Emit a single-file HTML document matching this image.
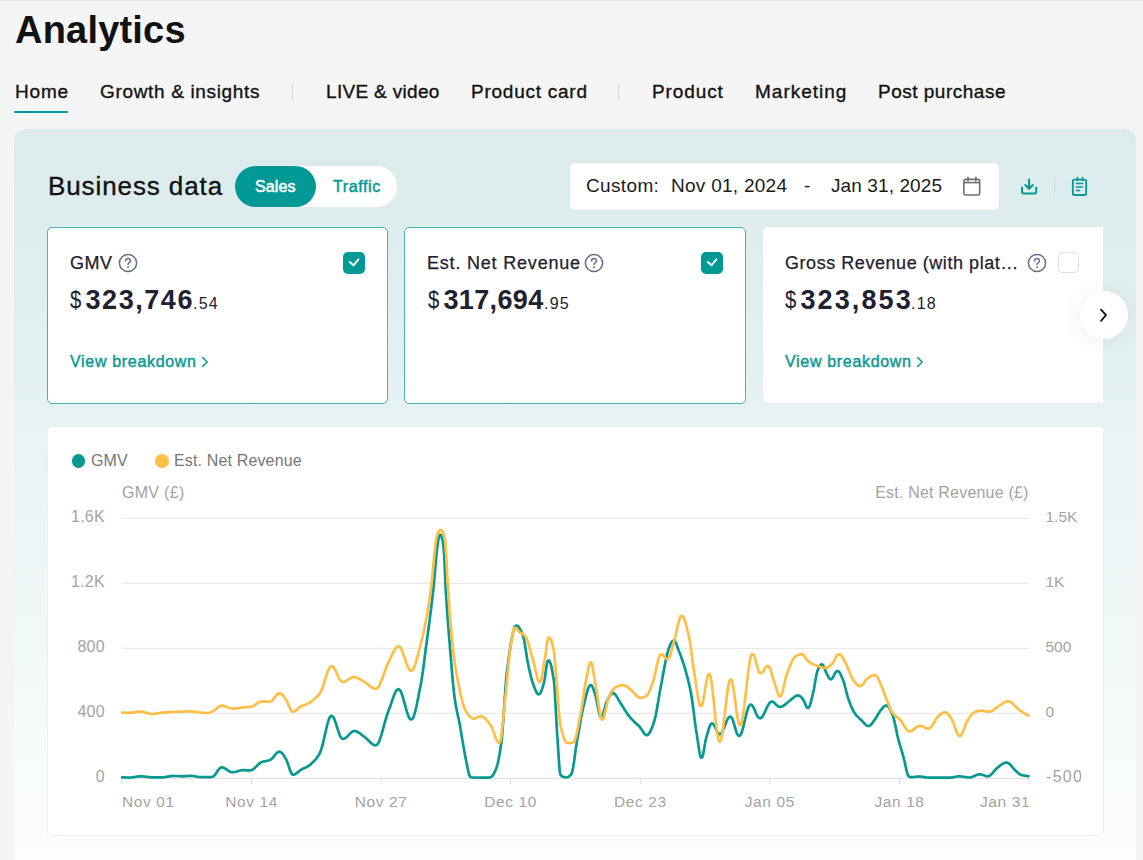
<!DOCTYPE html>
<html><head><meta charset="utf-8">
<style>
*{margin:0;padding:0;box-sizing:border-box}
html,body{width:1143px;height:860px;overflow:hidden;background:#f5f5f5;font-family:"Liberation Sans",sans-serif;color:#121212}
.abs{position:absolute;white-space:nowrap}
#topline{position:absolute;left:0;top:0;width:1143px;height:1px;background:#e3e3e3}
#title{left:15px;top:8px;font-size:38px;font-weight:bold;line-height:44px;color:#121212;letter-spacing:0.2px}
.tab{top:80px;font-size:19px;line-height:24px;color:#121212;-webkit-text-stroke:0.35px #121212}
.sep{position:absolute;top:84px;width:1px;height:16px;background:#d5d5d5}
#uline{position:absolute;left:14px;top:110.75px;width:54px;height:2.5px;background:#009995;border-radius:2px}
#panel{position:absolute;left:14px;top:129px;width:1122px;height:760px;border-radius:12px;background:linear-gradient(180deg,#dbebeb 0%,#e0eeee 20.5%,#e7f3f3 38.3%,#eff8f7 62.6%,#fcfdfd 95%,#fdfefe 100%)}
#bd{left:48px;top:171px;font-size:26px;line-height:30px;letter-spacing:0.9px;color:#121212;-webkit-text-stroke:0.35px #121212}
#toggle{position:absolute;left:235px;top:166px;width:162px;height:41px;border-radius:21px;background:#fff}
#sales{position:absolute;left:0;top:0;width:81px;height:41px;border-radius:21px;background:#009995}
#salesT{left:255px;top:178px;font-size:16px;line-height:18px;color:#fff;letter-spacing:0.1px;-webkit-text-stroke:0.5px #fff}
#trafT{left:333px;top:178px;font-size:16px;line-height:18px;color:#009995;letter-spacing:0.6px;-webkit-text-stroke:0.45px #009995}
#date{position:absolute;left:568.5px;top:162px;width:431px;height:48.5px;border-radius:6px;background:#fff;border:1px solid #e2e5e5}
.dt{top:175px;font-size:19px;line-height:22px;color:#1a1a1a}
.card{position:absolute;top:227px;height:176.5px;border-radius:5px;background:#fff}
.sel{border:1.1px solid #4db2ad}
.ctitle{top:251.5px;font-size:18px;line-height:22px;color:#1f2030;letter-spacing:0.8px;-webkit-text-stroke:0.25px #1f2030}
.q{position:absolute;top:254px;width:18px;height:18px;border:1.5px solid #6e7287;border-radius:50%;color:#6e7287;font-size:12px;line-height:15px;text-align:center}
.cb{position:absolute;top:252.3px;width:22px;height:21.7px;border-radius:5px;background:#009995}
.cb0{position:absolute;top:252px;width:21px;height:21px;border-radius:4px;background:#fff;border:1px solid #dfe0e6}
.dollar{top:287px;font-size:23px;line-height:26px;color:#1f2030;transform:scaleX(0.88);transform-origin:left}
.big{top:284.5px;font-size:27px;font-weight:bold;line-height:30px;color:#1f2030;letter-spacing:1.55px}
.cents{top:294px;font-size:16px;line-height:20px;color:#1f2030;letter-spacing:1.2px}
.vb{top:352px;font-size:16px;line-height:20px;color:#0c9a95;letter-spacing:0.68px;-webkit-text-stroke:0.45px #0c9a95;width:150px;height:20px}
#chev{position:absolute;left:1080px;top:291px;width:48px;height:48px;border-radius:50%;background:#fff;box-shadow:0 2px 22px rgba(0,0,0,0.075)}
#chart{position:absolute;left:47px;top:425.5px;width:1056.5px;height:410px;border-radius:5px;background:#fff;border:1px solid #edf0f0}
.lab{font-size:16px;line-height:18px;color:#a3a3a3}
.rl{left:1045.5px;margin-top:0.7px;font-size:15.5px}
.xa{top:793px;font-size:15.5px;letter-spacing:0.6px}
.chv{display:inline-block;font-weight:normal;font-size:20px;line-height:20px;vertical-align:top;margin-top:-2px}
.leg{font-size:16px;line-height:18px;color:#767676;letter-spacing:0.15px}
.ry{right:1038.2px;text-align:right;letter-spacing:0.2px}
.xl{transform:translateX(-50%)}
</style></head><body>
<div id="topline"></div>
<div id="title" class="abs">Analytics</div>
<div class="abs tab" style="left:15px;letter-spacing:0.8px">Home</div>
<div class="abs tab" style="left:100px;letter-spacing:0.66px">Growth &amp; insights</div>
<div class="sep" style="left:292px"></div>
<div class="abs tab" style="left:326px;letter-spacing:0.32px">LIVE &amp; video</div>
<div class="abs tab" style="left:471px;letter-spacing:0.75px">Product card</div>
<div class="sep" style="left:618px"></div>
<div class="abs tab" style="left:652px;letter-spacing:0.9px">Product</div>
<div class="abs tab" style="left:755px;letter-spacing:1px">Marketing</div>
<div class="abs tab" style="left:878px;letter-spacing:0.5px">Post purchase</div>
<div id="uline"></div>
<div id="panel"></div>
<div id="bd" class="abs">Business data</div>
<div id="toggle"><div id="sales"></div></div>
<div id="salesT" class="abs">Sales</div>
<div id="trafT" class="abs">Traffic</div>
<div id="date"></div>
<div class="abs dt" style="left:586px;letter-spacing:0.35px">Custom:</div>
<div class="abs dt" style="left:671px;letter-spacing:0.27px">Nov 01, 2024</div>
<div class="abs dt" style="left:804px">-</div>
<div class="abs dt" style="left:831px;letter-spacing:0.1px">Jan 31, 2025</div>

<svg class="abs" style="left:955px;top:170px" width="140" height="35" viewBox="955 170 140 35">
<rect x="963.9" y="179.4" width="15.8" height="15.6" rx="2" fill="none" stroke="#6f6f6f" stroke-width="1.6"/>
<line x1="964" y1="182.6" x2="979.6" y2="182.6" stroke="#6f6f6f" stroke-width="1.6"/>
<line x1="968" y1="177.3" x2="968" y2="181" stroke="#6f6f6f" stroke-width="1.6" stroke-linecap="round"/>
<line x1="975.8" y1="177.3" x2="975.8" y2="181" stroke="#6f6f6f" stroke-width="1.6" stroke-linecap="round"/>
<path d="M1029.1 179.6 V188.6 M1025.4 185 L1029.1 188.8 L1032.8 185" fill="none" stroke="#079892" stroke-width="2" stroke-linecap="round" stroke-linejoin="round"/>
<path d="M1022 187.6 V191.8 Q1022 193.4 1023.6 193.4 H1034.6 Q1036.2 193.4 1036.2 191.8 V187.6" fill="none" stroke="#079892" stroke-width="2" stroke-linecap="round"/>
<line x1="1054.5" y1="177.5" x2="1054.5" y2="195.5" stroke="#c9dcdc" stroke-width="1"/>
<rect x="1072.8" y="179.6" width="13.4" height="15.4" rx="1.8" fill="none" stroke="#079892" stroke-width="1.8"/>
<line x1="1077.5" y1="177.6" x2="1077.5" y2="180.6" stroke="#079892" stroke-width="1.6" stroke-linecap="round"/>
<line x1="1082.6" y1="177.6" x2="1082.6" y2="180.6" stroke="#079892" stroke-width="1.6" stroke-linecap="round"/>
<line x1="1076.3" y1="183.6" x2="1082.6" y2="183.6" stroke="#079892" stroke-width="1.5" stroke-linecap="round"/>
<line x1="1076.3" y1="187.1" x2="1082.6" y2="187.1" stroke="#079892" stroke-width="1.5" stroke-linecap="round"/>
<line x1="1076.3" y1="190.6" x2="1079.6" y2="190.6" stroke="#079892" stroke-width="1.5" stroke-linecap="round"/>
</svg>

<div class="card sel" style="left:47px;width:341px"></div>
<div class="card sel" style="left:404px;width:342px"></div>
<div class="card" style="left:763px;width:340px;height:175.5px;border-radius:5px 0 0 5px"></div>
<div class="abs ctitle" style="left:70px;letter-spacing:0.5px">GMV</div><svg class="abs" style="left:118px;top:253.4px" width="20" height="20" viewBox="0 0 20 20"><circle cx="10" cy="10" r="8.6" fill="none" stroke="#6b6f86" stroke-width="1.5"/><path d="M7.6 7.9 Q7.7 5.6 10 5.6 Q12.4 5.6 12.4 7.8 Q12.4 9.2 11 9.9 Q10 10.4 10 11.6" fill="none" stroke="#6b6f86" stroke-width="1.5" stroke-linecap="round"/><circle cx="10" cy="14.3" r="0.95" fill="#6b6f86"/></svg>
<div class="cb" style="left:343px"><svg width="22" height="22" viewBox="0 0 22 22"><path d="M6.7 10 L10.5 13.3 L15.4 7.4" fill="none" stroke="#fff" stroke-width="2" stroke-linecap="round" stroke-linejoin="round"/></svg></div>
<div class="abs dollar" style="left:70px">$</div>
<div class="abs big" style="left:85.5px">323,746</div>
<div class="abs cents" style="left:193px">.54</div>
<div class="abs vb" style="left:70px">View breakdown<svg style="position:absolute;left:130.5px;top:4px" width="8" height="12" viewBox="0 0 8 12"><path d="M1.6 1.5 L6.2 6 L1.6 10.5" fill="none" stroke="#0c9a95" stroke-width="1.6" stroke-linecap="round" stroke-linejoin="round"/></svg></div>
<div class="abs ctitle" style="left:427px">Est. Net Revenue</div><svg class="abs" style="left:584px;top:253.4px" width="20" height="20" viewBox="0 0 20 20"><circle cx="10" cy="10" r="8.6" fill="none" stroke="#6b6f86" stroke-width="1.5"/><path d="M7.6 7.9 Q7.7 5.6 10 5.6 Q12.4 5.6 12.4 7.8 Q12.4 9.2 11 9.9 Q10 10.4 10 11.6" fill="none" stroke="#6b6f86" stroke-width="1.5" stroke-linecap="round"/><circle cx="10" cy="14.3" r="0.95" fill="#6b6f86"/></svg>
<div class="cb" style="left:701px"><svg width="22" height="22" viewBox="0 0 22 22"><path d="M6.7 10 L10.5 13.3 L15.4 7.4" fill="none" stroke="#fff" stroke-width="2" stroke-linecap="round" stroke-linejoin="round"/></svg></div>
<div class="abs dollar" style="left:428px">$</div>
<div class="abs big" style="left:443.5px;letter-spacing:0.35px">317,694</div>
<div class="abs cents" style="left:544px">.95</div>
<div class="abs ctitle" style="left:785px;letter-spacing:0.55px">Gross Revenue (with plat…</div><svg class="abs" style="left:1027px;top:253.4px" width="20" height="20" viewBox="0 0 20 20"><circle cx="10" cy="10" r="8.6" fill="none" stroke="#6b6f86" stroke-width="1.5"/><path d="M7.6 7.9 Q7.7 5.6 10 5.6 Q12.4 5.6 12.4 7.8 Q12.4 9.2 11 9.9 Q10 10.4 10 11.6" fill="none" stroke="#6b6f86" stroke-width="1.5" stroke-linecap="round"/><circle cx="10" cy="14.3" r="0.95" fill="#6b6f86"/></svg>
<div class="cb0" style="left:1058px"></div>
<div class="abs dollar" style="left:785px">$</div>
<div class="abs big" style="left:800.5px;letter-spacing:2.1px">323,853</div>
<div class="abs cents" style="left:911px">.18</div>
<div class="abs vb" style="left:785px">View breakdown<svg style="position:absolute;left:130.5px;top:4px" width="8" height="12" viewBox="0 0 8 12"><path d="M1.6 1.5 L6.2 6 L1.6 10.5" fill="none" stroke="#0c9a95" stroke-width="1.6" stroke-linecap="round" stroke-linejoin="round"/></svg></div>
<div id="chev"><svg width="48" height="48" viewBox="0 0 48 48"><path d="M21 18.6 L26 24.2 L21 29.8" fill="none" stroke="#121212" stroke-width="1.8" stroke-linecap="round" stroke-linejoin="round"/></svg></div>


<div id="chart"></div>
<div class="abs" style="left:71.9px;top:454.2px;width:13.6px;height:13.6px;border-radius:50%;background:#079892"></div>
<div class="abs leg" style="left:91px;top:452px">GMV</div>
<div class="abs" style="left:155px;top:454.2px;width:13.6px;height:13.6px;border-radius:50%;background:#ffbf47"></div>
<div class="abs leg" style="left:174px;top:452px">Est. Net Revenue</div>
<div class="abs lab" style="left:122px;top:484px;font-size:16px;letter-spacing:0.3px">GMV (£)</div>
<div class="abs lab" style="right:114.4px;top:484px;font-size:16px;letter-spacing:0.2px">Est. Net Revenue (£)</div>
<div class="abs lab ry" style="top:507.5px">1.6K</div>
<div class="abs lab ry" style="top:572.5px">1.2K</div>
<div class="abs lab ry" style="top:637.5px">800</div>
<div class="abs lab ry" style="top:702.5px">400</div>
<div class="abs lab ry" style="top:767.5px">0</div>
<div class="abs lab rl" style="top:507.5px">1.5K</div>
<div class="abs lab rl" style="top:572.5px">1K</div>
<div class="abs lab rl" style="top:637.5px">500</div>
<div class="abs lab rl" style="top:702.5px">0</div>
<div class="abs" style="left:1046px;top:768.2px;width:34.8px;height:20px;overflow:hidden"><span class="lab" style="letter-spacing:1.3px">-500</span></div>
<div class="abs lab xa" style="left:122px">Nov 01</div>
<div class="abs lab xa xl" style="left:251.5px">Nov 14</div>
<div class="abs lab xa xl" style="left:381.2px">Nov 27</div>
<div class="abs lab xa xl" style="left:510.6px">Dec 10</div>
<div class="abs lab xa xl" style="left:640.3px">Dec 23</div>
<div class="abs lab xa xl" style="left:769.8px">Jan 05</div>
<div class="abs lab xa xl" style="left:899.5px">Jan 18</div>
<div class="abs lab xa" style="right:112.9px">Jan 31</div>
<!--CHARTSVG--><svg class="abs" style="left:0;top:0" width="1143" height="860" viewBox="0 0 1143 860"><line x1="121.5" y1="518.3" x2="1029.5" y2="518.3" stroke="#e4e4e4" stroke-width="1"/><line x1="121.5" y1="583.3" x2="1029.5" y2="583.3" stroke="#e4e4e4" stroke-width="1"/><line x1="121.5" y1="648.3" x2="1029.5" y2="648.3" stroke="#e4e4e4" stroke-width="1"/><line x1="121.5" y1="713.3" x2="1029.5" y2="713.3" stroke="#e4e4e4" stroke-width="1"/><line x1="121.5" y1="778.3" x2="1029.5" y2="778.3" stroke="#d9d9d9" stroke-width="1"/><line x1="121.8" y1="778" x2="121.8" y2="784" stroke="#d9d9d9" stroke-width="1"/><line x1="251.5" y1="778" x2="251.5" y2="784" stroke="#d9d9d9" stroke-width="1"/><line x1="381.2" y1="778" x2="381.2" y2="784" stroke="#d9d9d9" stroke-width="1"/><line x1="510.6" y1="778" x2="510.6" y2="784" stroke="#d9d9d9" stroke-width="1"/><line x1="640.3" y1="778" x2="640.3" y2="784" stroke="#d9d9d9" stroke-width="1"/><line x1="769.8" y1="778" x2="769.8" y2="784" stroke="#d9d9d9" stroke-width="1"/><line x1="899.5" y1="778" x2="899.5" y2="784" stroke="#d9d9d9" stroke-width="1"/><line x1="1029.0" y1="778" x2="1029.0" y2="784" stroke="#d9d9d9" stroke-width="1"/><path d="M122.1 777.2 L123.1 777.3 L124.5 777.4 L126.0 777.5 L127.5 777.5 L129.0 777.6 L130.5 777.5 L132.0 777.4 L133.5 777.2 L134.9 777.0 L136.4 776.7 L137.9 776.5 L139.4 776.4 L140.9 776.4 L142.4 776.4 L143.9 776.5 L145.4 776.7 L146.9 776.9 L148.4 777.1 L149.8 777.2 L151.3 777.3 L152.8 777.4 L154.3 777.4 L155.8 777.4 L157.3 777.4 L158.8 777.4 L160.3 777.4 L161.8 777.4 L163.3 777.3 L164.8 777.1 L166.3 776.9 L167.8 776.6 L169.3 776.4 L170.7 776.2 L172.2 776.0 L173.7 775.9 L175.2 776.0 L176.7 776.0 L178.2 776.1 L179.7 776.2 L181.2 776.2 L182.7 776.3 L184.2 776.2 L185.7 776.1 L187.2 776.0 L188.7 775.8 L190.2 775.8 L191.7 775.8 L193.2 776.0 L194.6 776.2 L196.1 776.5 L197.6 776.8 L199.1 777.0 L200.5 777.2 L202.0 777.2 L203.5 777.2 L205.0 777.2 L206.5 777.2 L208.0 777.2 L209.5 777.2 L211.0 777.1 L212.4 776.8 L213.7 776.1 L214.7 775.1 L215.6 773.9 L216.4 772.7 L217.2 771.4 L218.1 770.2 L219.0 769.0 L220.1 768.0 L221.3 767.4 L222.7 767.4 L224.0 767.9 L225.3 768.6 L226.5 769.4 L227.8 770.3 L229.0 771.1 L230.3 771.8 L231.7 772.2 L233.2 772.2 L234.7 772.0 L236.1 771.7 L237.6 771.2 L239.0 770.8 L240.4 770.5 L241.9 770.2 L243.4 770.2 L244.9 770.2 L246.4 770.3 L247.9 770.4 L249.4 770.4 L250.9 770.3 L252.2 769.8 L253.5 769.1 L254.6 768.1 L255.7 767.1 L256.8 766.0 L257.8 764.9 L258.9 763.9 L260.0 763.0 L261.3 762.2 L262.7 761.7 L264.1 761.3 L265.6 761.1 L267.1 760.8 L268.5 760.5 L269.9 760.0 L271.2 759.3 L272.3 758.3 L273.3 757.2 L274.2 756.0 L275.1 754.8 L276.1 753.7 L277.1 752.6 L278.3 751.9 L279.6 751.7 L280.9 752.2 L282.0 753.1 L282.9 754.3 L283.8 755.5 L284.6 756.8 L285.3 758.1 L286.1 759.4 L286.8 760.7 L287.3 762.1 L287.8 763.5 L288.3 764.9 L288.8 766.4 L289.2 767.8 L289.7 769.2 L290.2 770.6 L290.7 772.0 L291.4 773.3 L292.2 774.4 L293.4 774.8 L294.6 774.5 L295.9 773.8 L297.0 772.9 L298.2 771.9 L299.3 770.9 L300.5 770.1 L301.8 769.3 L303.2 768.6 L304.5 768.0 L305.9 767.4 L307.2 766.7 L308.5 765.9 L309.7 765.1 L310.9 764.1 L312.0 763.1 L313.1 762.1 L314.1 761.0 L315.1 759.9 L316.1 758.8 L317.0 757.6 L317.9 756.4 L318.7 755.1 L319.4 753.8 L320.1 752.5 L320.7 751.1 L321.2 749.7 L321.6 748.2 L322.0 746.8 L322.4 745.3 L322.8 743.9 L323.2 742.4 L323.5 741.0 L323.8 739.5 L324.2 738.1 L324.5 736.6 L324.8 735.1 L325.2 733.7 L325.5 732.2 L325.8 730.7 L326.2 729.3 L326.5 727.8 L326.9 726.4 L327.2 724.9 L327.6 723.5 L328.0 722.0 L328.5 720.6 L328.9 719.2 L329.5 717.8 L330.3 716.6 L331.2 715.9 L332.3 716.1 L333.2 717.0 L333.9 718.3 L334.5 719.6 L335.1 721.0 L335.6 722.5 L336.0 723.9 L336.5 725.3 L336.9 726.8 L337.4 728.2 L337.8 729.6 L338.3 731.0 L338.8 732.5 L339.3 733.9 L339.8 735.3 L340.4 736.6 L341.2 737.9 L342.2 738.7 L343.4 738.9 L344.7 738.5 L345.9 737.7 L347.0 736.7 L348.1 735.6 L349.1 734.5 L350.2 733.4 L351.3 732.4 L352.5 731.6 L353.8 731.1 L355.2 731.1 L356.6 731.4 L358.0 732.1 L359.2 732.9 L360.5 733.7 L361.6 734.7 L362.8 735.6 L364.0 736.5 L365.2 737.4 L366.3 738.4 L367.4 739.4 L368.5 740.5 L369.5 741.5 L370.6 742.6 L371.7 743.6 L372.9 744.5 L374.2 745.1 L375.5 745.3 L376.8 744.9 L377.8 743.9 L378.5 742.6 L379.2 741.3 L379.7 739.9 L380.2 738.5 L380.7 737.0 L381.2 735.6 L381.6 734.2 L382.0 732.7 L382.4 731.3 L382.8 729.9 L383.2 728.4 L383.6 727.0 L384.0 725.5 L384.4 724.1 L384.8 722.6 L385.2 721.2 L385.6 719.7 L386.1 718.3 L386.5 716.9 L386.9 715.4 L387.4 714.0 L387.9 712.6 L388.4 711.2 L388.9 709.8 L389.4 708.4 L390.0 707.0 L390.5 705.5 L391.0 704.1 L391.4 702.7 L391.9 701.3 L392.4 699.9 L392.9 698.4 L393.4 697.0 L393.9 695.6 L394.5 694.2 L395.1 692.9 L395.8 691.5 L396.6 690.3 L397.6 689.4 L398.7 689.2 L399.7 689.9 L400.5 691.0 L401.2 692.4 L401.7 693.8 L402.2 695.2 L402.7 696.6 L403.1 698.0 L403.5 699.5 L403.9 700.9 L404.3 702.4 L404.7 703.8 L405.1 705.3 L405.5 706.7 L405.9 708.2 L406.3 709.6 L406.7 711.0 L407.1 712.5 L407.6 713.9 L408.1 715.3 L408.6 716.7 L409.3 718.0 L410.1 719.1 L411.2 719.5 L412.2 719.1 L413.0 718.0 L413.6 716.6 L414.1 715.2 L414.5 713.8 L415.0 712.4 L415.3 710.9 L415.7 709.4 L416.0 708.0 L416.4 706.5 L416.7 705.1 L417.0 703.6 L417.3 702.1 L417.6 700.6 L417.9 699.2 L418.2 697.7 L418.5 696.2 L418.7 694.8 L419.0 693.3 L419.3 691.8 L419.6 690.3 L419.9 688.9 L420.2 687.4 L420.5 685.9 L420.8 684.5 L421.0 683.0 L421.3 681.5 L421.5 680.0 L421.8 678.5 L422.0 677.1 L422.2 675.6 L422.4 674.1 L422.7 672.6 L422.9 671.1 L423.1 669.6 L423.3 668.2 L423.5 666.7 L423.7 665.2 L423.9 663.7 L424.1 662.2 L424.3 660.7 L424.5 659.2 L424.6 657.7 L424.8 656.3 L425.0 654.8 L425.2 653.3 L425.4 651.8 L425.6 650.3 L425.8 648.8 L426.0 647.3 L426.2 645.8 L426.4 644.4 L426.6 642.9 L426.8 641.4 L427.0 639.9 L427.2 638.4 L427.4 636.9 L427.6 635.4 L427.8 633.9 L428.0 632.5 L428.2 631.0 L428.4 629.5 L428.6 628.0 L428.8 626.5 L429.0 625.0 L429.2 623.5 L429.4 622.1 L429.6 620.6 L429.8 619.1 L429.9 617.6 L430.1 616.1 L430.3 614.6 L430.5 613.1 L430.7 611.6 L430.9 610.1 L431.1 608.7 L431.2 607.2 L431.4 605.7 L431.6 604.2 L431.8 602.7 L432.0 601.2 L432.1 599.7 L432.3 598.2 L432.5 596.7 L432.6 595.3 L432.8 593.8 L433.0 592.3 L433.1 590.8 L433.3 589.3 L433.5 587.8 L433.6 586.3 L433.8 584.8 L433.9 583.3 L434.1 581.8 L434.2 580.3 L434.3 578.8 L434.5 577.3 L434.6 575.9 L434.7 574.4 L434.8 572.9 L435.0 571.4 L435.1 569.9 L435.2 568.4 L435.3 566.9 L435.4 565.4 L435.6 563.9 L435.7 562.4 L435.8 560.9 L436.0 559.4 L436.1 557.9 L436.2 556.4 L436.4 554.9 L436.5 553.4 L436.7 551.9 L436.9 550.5 L437.0 549.0 L437.2 547.5 L437.4 546.0 L437.6 544.5 L437.8 543.0 L438.0 541.5 L438.3 540.1 L438.6 538.6 L438.9 537.1 L439.4 535.8 L440.0 534.9 L440.7 534.9 L441.3 535.8 L441.8 537.2 L442.1 538.6 L442.5 540.1 L442.8 541.6 L443.0 543.0 L443.2 544.5 L443.4 546.0 L443.5 547.5 L443.7 549.0 L443.8 550.5 L444.0 552.0 L444.1 553.5 L444.2 555.0 L444.3 556.5 L444.3 558.0 L444.4 559.5 L444.5 561.0 L444.5 562.5 L444.6 564.0 L444.7 565.5 L444.7 567.0 L444.8 568.5 L444.8 570.0 L444.9 571.5 L444.9 573.0 L445.0 574.5 L445.1 576.0 L445.1 577.5 L445.2 579.0 L445.3 580.5 L445.3 582.0 L445.4 583.5 L445.5 585.0 L445.6 586.5 L445.7 588.0 L445.7 589.5 L445.8 590.9 L445.9 592.4 L446.0 593.9 L446.1 595.4 L446.2 596.9 L446.3 598.4 L446.4 599.9 L446.5 601.4 L446.6 602.9 L446.7 604.4 L446.8 605.9 L446.9 607.4 L447.0 608.9 L447.1 610.4 L447.2 611.9 L447.3 613.4 L447.4 614.9 L447.5 616.4 L447.6 617.9 L447.7 619.4 L447.9 620.9 L448.0 622.4 L448.1 623.9 L448.2 625.4 L448.3 626.9 L448.4 628.4 L448.6 629.9 L448.7 631.3 L448.8 632.8 L448.9 634.3 L449.0 635.8 L449.2 637.3 L449.3 638.8 L449.4 640.3 L449.5 641.8 L449.7 643.3 L449.8 644.8 L449.9 646.3 L450.0 647.8 L450.1 649.3 L450.3 650.8 L450.4 652.3 L450.5 653.8 L450.6 655.3 L450.8 656.8 L450.9 658.3 L451.0 659.8 L451.1 661.2 L451.2 662.7 L451.4 664.2 L451.5 665.7 L451.6 667.2 L451.7 668.7 L451.9 670.2 L452.0 671.7 L452.1 673.2 L452.2 674.7 L452.4 676.2 L452.5 677.7 L452.6 679.2 L452.8 680.7 L452.9 682.2 L453.1 683.7 L453.2 685.2 L453.4 686.7 L453.5 688.1 L453.7 689.6 L453.8 691.1 L454.0 692.6 L454.2 694.1 L454.3 695.6 L454.5 697.1 L454.7 698.6 L454.9 700.1 L455.2 701.5 L455.4 703.0 L455.7 704.5 L455.9 706.0 L456.2 707.5 L456.5 708.9 L456.8 710.4 L457.1 711.9 L457.4 713.3 L457.7 714.8 L458.0 716.3 L458.4 717.7 L458.7 719.2 L459.0 720.7 L459.3 722.1 L459.6 723.6 L459.8 725.1 L460.1 726.5 L460.4 728.0 L460.6 729.5 L460.9 731.0 L461.1 732.5 L461.4 733.9 L461.6 735.4 L461.9 736.9 L462.1 738.4 L462.4 739.9 L462.6 741.3 L462.9 742.8 L463.1 744.3 L463.4 745.8 L463.6 747.3 L463.9 748.7 L464.1 750.2 L464.4 751.7 L464.7 753.2 L464.9 754.6 L465.2 756.1 L465.5 757.6 L465.8 759.0 L466.1 760.5 L466.4 762.0 L466.7 763.5 L467.0 764.9 L467.3 766.4 L467.6 767.9 L467.9 769.4 L468.2 770.8 L468.5 772.3 L468.9 773.7 L469.3 775.1 L469.9 776.4 L470.9 777.2 L472.3 777.5 L473.7 777.6 L475.2 777.6 L476.7 777.6 L478.2 777.6 L479.7 777.6 L481.2 777.6 L482.7 777.6 L484.2 777.6 L485.7 777.6 L487.2 777.6 L488.7 777.6 L490.1 777.4 L491.4 776.8 L492.5 775.9 L493.3 774.7 L494.0 773.4 L494.7 772.0 L495.3 770.6 L495.9 769.3 L496.4 767.9 L496.9 766.4 L497.3 765.0 L497.7 763.5 L498.0 762.1 L498.4 760.6 L498.7 759.1 L498.9 757.7 L499.2 756.2 L499.5 754.7 L499.7 753.2 L499.9 751.8 L500.2 750.3 L500.4 748.8 L500.6 747.3 L500.8 745.8 L501.1 744.3 L501.3 742.9 L501.5 741.4 L501.6 739.9 L501.8 738.4 L501.9 736.9 L502.1 735.4 L502.2 733.9 L502.4 732.4 L502.5 730.9 L502.6 729.4 L502.7 727.9 L502.8 726.4 L502.9 724.9 L503.1 723.4 L503.2 721.9 L503.3 720.5 L503.4 719.0 L503.5 717.5 L503.6 716.0 L503.7 714.5 L503.8 713.0 L503.9 711.5 L504.0 710.0 L504.1 708.5 L504.2 707.0 L504.3 705.5 L504.4 704.0 L504.5 702.5 L504.6 701.0 L504.7 699.5 L504.8 698.0 L504.9 696.5 L505.0 695.0 L505.1 693.5 L505.2 692.0 L505.3 690.5 L505.4 689.0 L505.5 687.5 L505.6 686.0 L505.8 684.5 L505.9 683.0 L506.0 681.5 L506.1 680.1 L506.2 678.6 L506.4 677.1 L506.5 675.6 L506.7 674.1 L506.8 672.6 L507.0 671.1 L507.2 669.6 L507.4 668.1 L507.6 666.6 L507.8 665.1 L508.0 663.7 L508.2 662.2 L508.4 660.7 L508.6 659.2 L508.8 657.7 L509.0 656.2 L509.2 654.7 L509.4 653.3 L509.6 651.8 L509.9 650.3 L510.1 648.8 L510.3 647.3 L510.5 645.8 L510.8 644.4 L511.0 642.9 L511.2 641.4 L511.5 639.9 L511.8 638.4 L512.0 637.0 L512.3 635.5 L512.6 634.0 L512.9 632.6 L513.3 631.1 L513.7 629.7 L514.1 628.2 L514.7 626.9 L515.5 625.9 L516.6 625.5 L517.7 626.0 L518.7 627.0 L519.5 628.2 L520.2 629.5 L520.9 630.9 L521.5 632.2 L522.1 633.6 L522.7 635.0 L523.2 636.4 L523.6 637.8 L523.9 639.3 L524.2 640.8 L524.5 642.2 L524.8 643.7 L525.0 645.2 L525.2 646.7 L525.5 648.2 L525.7 649.7 L525.9 651.1 L526.2 652.6 L526.4 654.1 L526.6 655.6 L526.8 657.1 L527.1 658.5 L527.3 660.0 L527.6 661.5 L527.9 663.0 L528.2 664.4 L528.5 665.9 L528.8 667.4 L529.1 668.8 L529.5 670.3 L529.8 671.8 L530.1 673.2 L530.5 674.7 L530.8 676.1 L531.2 677.6 L531.6 679.1 L532.0 680.5 L532.4 681.9 L532.9 683.3 L533.4 684.8 L533.9 686.2 L534.5 687.6 L535.0 689.0 L535.6 690.4 L536.2 691.7 L536.9 693.0 L537.8 694.0 L538.8 694.4 L539.8 693.9 L540.6 692.8 L541.2 691.5 L541.7 690.1 L542.2 688.6 L542.6 687.2 L543.1 685.8 L543.5 684.3 L543.9 682.9 L544.2 681.4 L544.5 679.9 L544.8 678.5 L545.0 677.0 L545.2 675.5 L545.4 674.0 L545.6 672.5 L545.8 671.0 L546.0 669.6 L546.3 668.1 L546.5 666.6 L546.7 665.1 L547.0 663.6 L547.3 662.2 L547.8 661.0 L548.5 660.4 L549.3 660.8 L549.9 662.0 L550.4 663.3 L550.9 664.8 L551.2 666.2 L551.6 667.7 L551.9 669.2 L552.2 670.6 L552.5 672.1 L552.7 673.6 L553.0 675.0 L553.2 676.5 L553.5 678.0 L553.7 679.5 L553.9 681.0 L554.1 682.5 L554.2 684.0 L554.3 685.5 L554.5 686.9 L554.6 688.4 L554.7 689.9 L554.8 691.4 L554.9 692.9 L555.0 694.4 L555.0 695.9 L555.1 697.4 L555.2 698.9 L555.3 700.4 L555.4 701.9 L555.5 703.4 L555.5 704.9 L555.6 706.4 L555.7 707.9 L555.8 709.4 L555.9 710.9 L555.9 712.4 L556.0 713.9 L556.1 715.4 L556.2 716.9 L556.3 718.4 L556.3 719.9 L556.4 721.4 L556.5 722.9 L556.6 724.4 L556.7 725.9 L556.8 727.4 L556.9 728.9 L556.9 730.4 L557.0 731.9 L557.1 733.4 L557.2 734.9 L557.3 736.4 L557.5 737.9 L557.6 739.4 L557.7 740.9 L557.7 742.4 L557.8 743.8 L557.9 745.3 L558.0 746.8 L558.1 748.3 L558.2 749.8 L558.3 751.3 L558.4 752.8 L558.5 754.3 L558.6 755.8 L558.7 757.3 L558.8 758.8 L558.9 760.3 L559.0 761.8 L559.1 763.3 L559.2 764.8 L559.3 766.3 L559.4 767.8 L559.6 769.3 L559.7 770.8 L559.9 772.3 L560.2 773.7 L560.7 775.0 L561.7 776.0 L562.9 776.8 L564.3 777.2 L565.8 777.3 L567.2 777.1 L568.6 776.7 L569.9 775.9 L570.9 774.9 L571.6 773.7 L572.1 772.3 L572.4 770.9 L572.7 769.4 L573.0 767.9 L573.3 766.4 L573.5 764.9 L573.7 763.5 L574.0 762.0 L574.2 760.5 L574.4 759.0 L574.6 757.5 L574.8 756.0 L575.0 754.6 L575.2 753.1 L575.4 751.6 L575.6 750.1 L575.8 748.6 L576.0 747.1 L576.3 745.6 L576.5 744.2 L576.7 742.7 L577.0 741.2 L577.2 739.7 L577.5 738.2 L577.7 736.8 L578.0 735.3 L578.3 733.8 L578.5 732.3 L578.8 730.9 L579.0 729.4 L579.3 727.9 L579.5 726.4 L579.8 724.9 L580.1 723.5 L580.3 722.0 L580.6 720.5 L580.8 719.0 L581.1 717.6 L581.4 716.1 L581.7 714.6 L582.0 713.1 L582.3 711.7 L582.6 710.2 L582.9 708.7 L583.3 707.3 L583.6 705.8 L584.0 704.4 L584.3 702.9 L584.7 701.5 L585.1 700.0 L585.4 698.5 L585.8 697.1 L586.1 695.6 L586.5 694.2 L586.9 692.7 L587.3 691.3 L587.7 689.9 L588.2 688.4 L588.8 687.1 L589.5 685.8 L590.4 685.1 L591.4 685.2 L592.2 686.2 L592.8 687.5 L593.3 688.9 L593.8 690.3 L594.3 691.7 L594.8 693.2 L595.2 694.6 L595.6 696.0 L596.0 697.5 L596.3 699.0 L596.6 700.4 L596.9 701.9 L597.2 703.4 L597.5 704.8 L597.8 706.3 L598.1 707.8 L598.4 709.3 L598.7 710.7 L599.0 712.2 L599.4 713.6 L599.8 715.1 L600.4 716.3 L601.1 717.0 L601.9 716.7 L602.6 715.6 L603.1 714.3 L603.5 712.8 L603.9 711.4 L604.2 709.9 L604.6 708.5 L605.0 707.0 L605.4 705.6 L605.8 704.1 L606.3 702.7 L606.9 701.3 L607.5 700.0 L608.2 698.6 L608.9 697.3 L609.6 696.0 L610.4 694.8 L611.4 693.7 L612.6 693.2 L613.8 693.4 L614.9 694.2 L615.9 695.3 L616.7 696.6 L617.5 697.9 L618.2 699.2 L619.0 700.5 L619.7 701.8 L620.5 703.1 L621.3 704.3 L622.1 705.6 L622.9 706.8 L623.7 708.1 L624.5 709.4 L625.3 710.6 L626.1 711.9 L627.0 713.2 L627.8 714.4 L628.7 715.6 L629.6 716.8 L630.6 717.9 L631.6 719.0 L632.7 720.1 L633.7 721.1 L634.8 722.2 L635.9 723.2 L637.0 724.2 L638.1 725.2 L639.2 726.3 L640.1 727.4 L641.0 728.6 L641.9 729.9 L642.7 731.2 L643.5 732.4 L644.3 733.6 L645.3 734.6 L646.5 735.2 L647.7 734.9 L648.8 734.0 L649.6 732.8 L650.3 731.5 L650.9 730.2 L651.5 728.8 L652.1 727.4 L652.6 726.0 L653.1 724.6 L653.6 723.2 L654.1 721.8 L654.5 720.3 L654.9 718.9 L655.2 717.4 L655.6 715.9 L655.9 714.5 L656.1 713.0 L656.4 711.5 L656.7 710.1 L657.0 708.6 L657.2 707.1 L657.5 705.6 L657.7 704.1 L658.0 702.7 L658.2 701.2 L658.5 699.7 L658.7 698.2 L659.0 696.7 L659.2 695.3 L659.5 693.8 L659.7 692.3 L660.0 690.8 L660.2 689.4 L660.5 687.9 L660.8 686.4 L661.1 684.9 L661.4 683.5 L661.7 682.0 L662.0 680.5 L662.2 679.0 L662.5 677.6 L662.8 676.1 L663.0 674.6 L663.3 673.1 L663.6 671.7 L663.9 670.2 L664.1 668.7 L664.4 667.2 L664.7 665.8 L665.0 664.3 L665.3 662.8 L665.5 661.4 L665.8 659.9 L666.2 658.4 L666.5 657.0 L666.8 655.5 L667.2 654.0 L667.6 652.6 L668.0 651.1 L668.4 649.7 L668.9 648.3 L669.5 646.9 L670.0 645.5 L670.6 644.1 L671.3 642.8 L672.0 641.5 L673.0 640.7 L674.0 640.5 L674.9 641.3 L675.7 642.5 L676.3 643.9 L676.8 645.3 L677.3 646.7 L677.8 648.1 L678.3 649.5 L678.9 650.9 L679.4 652.3 L680.0 653.7 L680.5 655.1 L681.0 656.5 L681.5 657.9 L682.0 659.3 L682.5 660.7 L683.0 662.2 L683.5 663.6 L683.9 665.0 L684.3 666.5 L684.8 667.9 L685.2 669.3 L685.6 670.8 L686.0 672.2 L686.4 673.7 L686.8 675.1 L687.2 676.6 L687.6 678.0 L688.0 679.5 L688.3 680.9 L688.7 682.4 L689.0 683.8 L689.3 685.3 L689.7 686.8 L690.0 688.2 L690.3 689.7 L690.6 691.2 L690.9 692.6 L691.1 694.1 L691.4 695.6 L691.6 697.1 L691.9 698.6 L692.1 700.0 L692.3 701.5 L692.5 703.0 L692.7 704.5 L692.9 706.0 L693.1 707.5 L693.3 709.0 L693.5 710.5 L693.7 711.9 L693.9 713.4 L694.1 714.9 L694.2 716.4 L694.4 717.9 L694.6 719.4 L694.8 720.9 L695.0 722.4 L695.2 723.8 L695.4 725.3 L695.6 726.8 L695.8 728.3 L696.1 729.8 L696.3 731.3 L696.5 732.7 L696.8 734.2 L697.0 735.7 L697.2 737.2 L697.4 738.7 L697.6 740.2 L697.9 741.6 L698.1 743.1 L698.3 744.6 L698.5 746.1 L698.7 747.6 L699.0 749.1 L699.2 750.5 L699.4 752.0 L699.7 753.5 L700.0 755.0 L700.4 756.4 L701.0 757.5 L701.7 757.7 L702.3 757.0 L702.8 755.7 L703.1 754.2 L703.4 752.8 L703.7 751.3 L704.0 749.8 L704.2 748.3 L704.5 746.9 L704.7 745.4 L705.0 743.9 L705.2 742.4 L705.5 741.0 L705.8 739.5 L706.2 738.0 L706.5 736.6 L706.9 735.1 L707.4 733.7 L707.8 732.2 L708.2 730.8 L708.6 729.4 L709.1 727.9 L709.5 726.5 L710.1 725.2 L710.9 724.0 L711.8 723.4 L712.9 723.7 L713.8 724.7 L714.5 726.0 L715.2 727.3 L715.8 728.7 L716.4 730.0 L717.0 731.4 L717.7 732.7 L718.6 733.7 L719.7 734.2 L720.8 733.8 L721.7 732.8 L722.5 731.5 L723.1 730.1 L723.7 728.8 L724.3 727.4 L724.8 726.0 L725.3 724.6 L725.9 723.2 L726.4 721.8 L727.0 720.4 L727.7 719.0 L728.4 717.8 L729.4 716.9 L730.5 716.7 L731.4 717.4 L732.2 718.6 L732.7 719.9 L733.2 721.4 L733.7 722.8 L734.1 724.2 L734.5 725.7 L734.9 727.1 L735.3 728.5 L735.8 730.0 L736.2 731.4 L736.7 732.8 L737.3 734.2 L738.1 735.3 L739.0 735.9 L740.0 735.5 L740.8 734.4 L741.4 733.1 L741.9 731.7 L742.3 730.2 L742.7 728.8 L743.1 727.4 L743.5 725.9 L743.9 724.4 L744.2 723.0 L744.5 721.5 L744.9 720.1 L745.2 718.6 L745.6 717.1 L745.9 715.7 L746.3 714.2 L746.7 712.8 L747.1 711.3 L747.5 709.9 L747.9 708.5 L748.5 707.1 L749.1 705.8 L750.0 704.8 L751.0 704.6 L752.0 705.2 L752.9 706.4 L753.6 707.7 L754.2 709.0 L754.8 710.4 L755.4 711.8 L756.0 713.2 L756.6 714.5 L757.3 715.9 L758.1 717.1 L759.0 718.0 L760.2 718.3 L761.3 717.8 L762.3 716.8 L763.1 715.5 L763.8 714.2 L764.5 712.9 L765.1 711.5 L765.7 710.1 L766.3 708.8 L766.9 707.4 L767.6 706.1 L768.3 704.7 L769.1 703.5 L770.0 702.4 L771.2 701.7 L772.5 701.7 L773.7 702.4 L774.8 703.3 L775.9 704.4 L777.0 705.4 L778.1 706.3 L779.4 706.8 L780.8 706.8 L782.2 706.4 L783.5 705.7 L784.7 704.8 L785.9 703.9 L787.0 702.9 L788.2 702.0 L789.3 701.0 L790.5 700.1 L791.7 699.2 L792.8 698.2 L794.0 697.2 L795.2 696.4 L796.5 695.7 L797.8 695.4 L799.2 695.6 L800.4 696.3 L801.4 697.4 L802.4 698.5 L803.2 699.7 L804.0 701.0 L804.6 702.4 L805.2 703.8 L805.7 705.2 L806.4 706.5 L807.1 707.6 L808.1 707.9 L808.9 707.3 L809.6 706.1 L810.1 704.7 L810.5 703.3 L810.9 701.8 L811.3 700.4 L811.6 698.9 L812.0 697.5 L812.3 696.0 L812.7 694.5 L813.0 693.1 L813.4 691.6 L813.7 690.2 L814.0 688.7 L814.2 687.2 L814.5 685.7 L814.7 684.3 L815.0 682.8 L815.2 681.3 L815.5 679.8 L815.8 678.3 L816.0 676.9 L816.3 675.4 L816.6 673.9 L817.0 672.5 L817.4 671.0 L818.0 669.6 L818.5 668.3 L819.2 666.9 L819.9 665.6 L820.8 664.6 L821.9 664.3 L822.8 664.9 L823.6 666.0 L824.2 667.4 L824.7 668.8 L825.2 670.2 L825.8 671.6 L826.4 672.9 L827.1 674.3 L827.7 675.6 L828.4 677.0 L829.2 678.2 L830.1 679.1 L831.1 679.3 L832.1 678.6 L833.0 677.4 L833.6 676.1 L834.3 674.8 L834.9 673.4 L835.7 672.2 L836.6 671.2 L837.7 671.0 L838.8 671.5 L839.7 672.6 L840.4 673.9 L841.0 675.3 L841.6 676.7 L842.2 678.0 L842.8 679.4 L843.3 680.8 L843.8 682.2 L844.3 683.7 L844.7 685.1 L845.0 686.6 L845.4 688.0 L845.8 689.5 L846.1 690.9 L846.5 692.4 L846.9 693.8 L847.3 695.3 L847.7 696.7 L848.1 698.2 L848.6 699.6 L849.1 701.0 L849.6 702.4 L850.2 703.8 L850.7 705.2 L851.3 706.6 L851.9 707.9 L852.6 709.3 L853.2 710.6 L854.0 712.0 L854.8 713.2 L855.6 714.4 L856.6 715.6 L857.6 716.7 L858.7 717.7 L859.8 718.7 L860.9 719.7 L862.0 720.8 L863.0 721.9 L864.0 723.0 L865.0 724.1 L866.1 725.1 L867.3 725.8 L868.6 726.0 L869.9 725.5 L871.0 724.6 L872.0 723.4 L872.9 722.3 L873.7 721.0 L874.6 719.8 L875.5 718.6 L876.3 717.3 L877.1 716.0 L877.8 714.7 L878.6 713.4 L879.4 712.2 L880.2 710.9 L881.1 709.8 L882.1 708.6 L883.0 707.5 L884.1 706.4 L885.3 705.7 L886.6 705.5 L887.8 706.0 L888.7 707.0 L889.5 708.3 L890.2 709.6 L890.9 710.9 L891.5 712.3 L892.0 713.7 L892.6 715.1 L893.1 716.5 L893.5 717.9 L893.9 719.4 L894.3 720.8 L894.6 722.3 L894.9 723.8 L895.3 725.2 L895.6 726.7 L895.9 728.2 L896.2 729.6 L896.5 731.1 L896.8 732.6 L897.1 734.0 L897.4 735.5 L897.8 737.0 L898.1 738.4 L898.5 739.9 L898.9 741.3 L899.3 742.8 L899.7 744.2 L900.1 745.6 L900.6 747.1 L901.0 748.5 L901.4 750.0 L901.8 751.4 L902.3 752.8 L902.7 754.3 L903.1 755.7 L903.5 757.2 L903.9 758.6 L904.2 760.1 L904.6 761.5 L904.9 763.0 L905.2 764.5 L905.5 765.9 L905.9 767.4 L906.2 768.9 L906.5 770.3 L906.9 771.8 L907.3 773.2 L907.8 774.6 L908.4 775.9 L909.4 776.8 L910.7 777.1 L912.1 777.1 L913.6 777.0 L915.1 776.9 L916.6 776.7 L918.1 776.7 L919.6 776.7 L921.1 776.7 L922.6 776.9 L924.1 777.1 L925.6 777.3 L927.1 777.5 L928.6 777.6 L930.1 777.6 L931.6 777.6 L933.1 777.6 L934.6 777.6 L936.1 777.6 L937.6 777.6 L939.1 777.6 L940.6 777.6 L942.1 777.6 L943.6 777.6 L945.1 777.6 L946.6 777.6 L948.1 777.6 L949.6 777.6 L951.0 777.5 L952.5 777.3 L954.0 777.1 L955.5 776.8 L957.0 776.5 L958.4 776.4 L959.9 776.4 L961.4 776.5 L962.9 776.7 L964.4 777.0 L965.9 777.2 L967.4 777.4 L968.8 777.5 L970.3 777.4 L971.8 777.0 L973.1 776.5 L974.5 775.9 L975.8 775.2 L977.2 774.7 L978.7 774.3 L980.1 774.3 L981.6 774.6 L983.0 775.1 L984.4 775.6 L985.8 776.1 L987.2 776.3 L988.6 776.2 L989.9 775.6 L991.1 774.7 L992.1 773.6 L993.1 772.4 L994.0 771.3 L995.0 770.1 L996.0 769.0 L997.1 768.0 L998.2 767.1 L999.4 766.1 L1000.6 765.2 L1001.8 764.4 L1003.1 763.6 L1004.4 763.0 L1005.8 762.6 L1007.3 762.7 L1008.6 763.2 L1009.7 764.1 L1010.8 765.2 L1011.7 766.3 L1012.7 767.5 L1013.6 768.6 L1014.6 769.8 L1015.7 770.8 L1016.8 771.8 L1017.9 772.8 L1019.0 773.8 L1020.3 774.6 L1021.7 775.1 L1023.1 775.5 L1024.6 775.7 L1026.1 775.9 L1027.4 776.1 L1028.5 776.2" fill="none" stroke="#079892" stroke-width="2.7" stroke-linejoin="round" stroke-linecap="round"/><path d="M122.1 712.6 L123.1 712.7 L124.5 712.7 L126.0 712.7 L127.5 712.8 L129.0 712.8 L130.5 712.7 L132.0 712.6 L133.5 712.4 L135.0 712.2 L136.4 712.0 L137.9 711.8 L139.4 711.7 L140.9 711.7 L142.4 711.8 L143.9 712.1 L145.3 712.5 L146.8 712.9 L148.2 713.3 L149.6 713.7 L151.1 713.9 L152.6 714.0 L154.1 713.9 L155.6 713.7 L157.1 713.5 L158.5 713.2 L160.0 712.9 L161.5 712.7 L163.0 712.5 L164.5 712.4 L166.0 712.3 L167.5 712.3 L169.0 712.2 L170.5 712.1 L172.0 712.1 L173.5 712.0 L175.0 711.9 L176.5 711.9 L178.0 711.8 L179.5 711.7 L180.9 711.7 L182.4 711.6 L183.9 711.5 L185.4 711.5 L186.9 711.5 L188.4 711.4 L189.9 711.4 L191.4 711.5 L192.9 711.6 L194.4 711.7 L195.9 711.9 L197.4 712.2 L198.9 712.4 L200.4 712.6 L201.9 712.7 L203.4 712.8 L204.8 713.0 L206.3 713.0 L207.8 713.0 L209.3 712.8 L210.7 712.3 L212.0 711.7 L213.3 710.9 L214.6 710.1 L215.7 709.2 L216.9 708.2 L218.0 707.2 L219.3 706.4 L220.6 705.8 L222.0 705.6 L223.5 705.8 L224.9 706.2 L226.3 706.8 L227.6 707.4 L229.0 707.9 L230.5 708.3 L231.9 708.6 L233.4 708.6 L234.9 708.5 L236.4 708.3 L237.9 708.1 L239.3 707.8 L240.8 707.6 L242.3 707.5 L243.8 707.4 L245.3 707.3 L246.8 707.2 L248.3 707.1 L249.8 707.0 L251.3 706.7 L252.6 706.2 L254.0 705.5 L255.2 704.7 L256.5 703.9 L257.7 703.0 L259.0 702.3 L260.3 701.7 L261.8 701.4 L263.3 701.3 L264.7 701.4 L266.2 701.6 L267.7 701.8 L269.2 701.8 L270.6 701.5 L271.8 700.8 L272.8 699.7 L273.8 698.6 L274.7 697.4 L275.5 696.2 L276.5 695.0 L277.6 694.0 L278.8 693.4 L280.1 693.4 L281.3 694.0 L282.4 695.0 L283.4 696.1 L284.3 697.3 L285.2 698.5 L286.0 699.7 L286.8 701.0 L287.5 702.3 L288.1 703.7 L288.7 705.1 L289.3 706.5 L289.9 707.8 L290.5 709.2 L291.2 710.5 L292.2 711.4 L293.4 711.7 L294.7 711.3 L295.9 710.5 L297.0 709.5 L298.1 708.5 L299.2 707.5 L300.4 706.7 L301.7 706.0 L303.1 705.4 L304.5 704.9 L305.9 704.4 L307.3 703.9 L308.7 703.2 L310.0 702.5 L311.2 701.6 L312.4 700.7 L313.6 699.8 L314.7 698.8 L315.8 697.8 L316.9 696.8 L318.0 695.7 L318.9 694.6 L319.8 693.4 L320.6 692.1 L321.3 690.8 L321.9 689.4 L322.4 688.0 L322.9 686.6 L323.4 685.2 L323.8 683.7 L324.3 682.3 L324.7 680.9 L325.1 679.4 L325.6 678.0 L326.0 676.6 L326.5 675.1 L327.0 673.7 L327.4 672.3 L328.0 670.9 L328.6 669.5 L329.2 668.2 L330.1 667.0 L331.1 666.3 L332.3 666.4 L333.4 667.2 L334.2 668.4 L335.0 669.7 L335.7 671.0 L336.3 672.3 L336.9 673.7 L337.5 675.1 L338.2 676.4 L338.8 677.8 L339.5 679.1 L340.3 680.4 L341.3 681.4 L342.5 682.0 L343.8 682.1 L345.2 681.6 L346.5 680.9 L347.7 680.0 L348.9 679.1 L350.1 678.3 L351.4 677.6 L352.8 677.2 L354.3 677.1 L355.7 677.4 L357.1 677.8 L358.5 678.5 L359.8 679.2 L361.1 679.9 L362.4 680.7 L363.7 681.5 L364.9 682.3 L366.2 683.1 L367.4 684.0 L368.5 685.0 L369.7 685.9 L370.9 686.8 L372.1 687.7 L373.4 688.4 L374.8 688.8 L376.1 688.8 L377.3 688.1 L378.3 687.1 L379.1 685.8 L379.8 684.5 L380.4 683.1 L381.0 681.7 L381.5 680.3 L382.1 678.9 L382.6 677.5 L383.1 676.1 L383.6 674.7 L384.1 673.3 L384.6 671.9 L385.1 670.5 L385.6 669.1 L386.2 667.7 L386.7 666.3 L387.3 664.9 L387.9 663.5 L388.5 662.2 L389.2 660.8 L389.9 659.5 L390.5 658.1 L391.2 656.8 L391.8 655.4 L392.4 654.0 L393.1 652.7 L393.7 651.3 L394.5 650.0 L395.2 648.8 L396.1 647.6 L397.2 646.7 L398.4 646.3 L399.6 646.7 L400.5 647.7 L401.3 649.0 L401.9 650.4 L402.5 651.8 L403.0 653.2 L403.5 654.6 L404.0 656.0 L404.5 657.4 L404.9 658.8 L405.4 660.3 L405.9 661.7 L406.4 663.1 L406.9 664.5 L407.5 665.9 L408.0 667.3 L408.7 668.6 L409.5 669.8 L410.6 670.6 L411.7 670.6 L412.7 669.8 L413.5 668.7 L414.1 667.3 L414.7 665.9 L415.2 664.5 L415.6 663.1 L416.1 661.6 L416.5 660.2 L416.9 658.8 L417.3 657.3 L417.7 655.9 L418.0 654.4 L418.4 652.9 L418.8 651.5 L419.2 650.0 L419.5 648.6 L419.9 647.1 L420.3 645.7 L420.7 644.2 L421.1 642.8 L421.4 641.3 L421.8 639.9 L422.1 638.4 L422.5 637.0 L422.8 635.5 L423.2 634.0 L423.5 632.6 L423.8 631.1 L424.1 629.6 L424.4 628.2 L424.7 626.7 L425.0 625.2 L425.3 623.8 L425.6 622.3 L425.9 620.8 L426.1 619.3 L426.4 617.9 L426.7 616.4 L426.9 614.9 L427.2 613.4 L427.4 611.9 L427.7 610.5 L427.9 609.0 L428.2 607.5 L428.4 606.0 L428.6 604.5 L428.9 603.1 L429.1 601.6 L429.3 600.1 L429.5 598.6 L429.7 597.1 L430.0 595.6 L430.2 594.2 L430.4 592.7 L430.6 591.2 L430.8 589.7 L431.0 588.2 L431.2 586.7 L431.4 585.2 L431.6 583.8 L431.7 582.3 L431.9 580.8 L432.1 579.3 L432.2 577.8 L432.4 576.3 L432.5 574.8 L432.6 573.3 L432.8 571.8 L432.9 570.3 L433.0 568.8 L433.1 567.3 L433.3 565.8 L433.4 564.3 L433.5 562.8 L433.7 561.4 L433.8 559.9 L433.9 558.4 L434.1 556.9 L434.2 555.4 L434.4 553.9 L434.6 552.4 L434.7 550.9 L434.9 549.4 L435.0 547.9 L435.2 546.4 L435.4 544.9 L435.5 543.5 L435.7 542.0 L436.0 540.5 L436.2 539.0 L436.5 537.5 L436.9 536.1 L437.4 534.7 L437.9 533.3 L438.5 531.9 L439.3 530.7 L440.3 530.0 L441.3 530.2 L442.2 531.1 L442.9 532.4 L443.5 533.7 L443.9 535.2 L444.3 536.6 L444.7 538.1 L444.9 539.6 L445.1 541.0 L445.2 542.5 L445.4 544.0 L445.5 545.5 L445.6 547.0 L445.7 548.5 L445.8 550.0 L445.9 551.5 L446.0 553.0 L446.1 554.5 L446.2 556.0 L446.3 557.5 L446.4 559.0 L446.5 560.5 L446.6 562.0 L446.7 563.5 L446.7 565.0 L446.8 566.5 L446.9 568.0 L447.0 569.5 L447.0 571.0 L447.1 572.5 L447.2 574.0 L447.3 575.5 L447.3 577.0 L447.4 578.5 L447.5 580.0 L447.6 581.5 L447.7 583.0 L447.8 584.5 L447.9 585.9 L448.0 587.4 L448.1 588.9 L448.2 590.4 L448.3 591.9 L448.4 593.4 L448.5 594.9 L448.6 596.4 L448.7 597.9 L448.8 599.4 L448.9 600.9 L449.0 602.4 L449.1 603.9 L449.2 605.4 L449.3 606.9 L449.4 608.4 L449.5 609.9 L449.6 611.4 L449.8 612.9 L449.9 614.4 L450.0 615.9 L450.1 617.4 L450.2 618.9 L450.3 620.4 L450.5 621.9 L450.6 623.4 L450.7 624.8 L450.8 626.3 L451.0 627.8 L451.1 629.3 L451.2 630.8 L451.4 632.3 L451.5 633.8 L451.6 635.3 L451.8 636.8 L451.9 638.3 L452.1 639.8 L452.2 641.3 L452.4 642.8 L452.5 644.3 L452.7 645.8 L452.8 647.2 L453.0 648.7 L453.2 650.2 L453.4 651.7 L453.5 653.2 L453.7 654.7 L453.9 656.2 L454.1 657.7 L454.3 659.2 L454.5 660.6 L454.7 662.1 L454.9 663.6 L455.1 665.1 L455.3 666.6 L455.6 668.1 L455.8 669.5 L456.1 671.0 L456.3 672.5 L456.6 674.0 L456.9 675.4 L457.1 676.9 L457.4 678.4 L457.7 679.9 L458.0 681.4 L458.2 682.8 L458.5 684.3 L458.8 685.8 L459.1 687.2 L459.4 688.7 L459.7 690.2 L460.0 691.7 L460.3 693.1 L460.6 694.6 L460.9 696.0 L461.3 697.5 L461.6 699.0 L462.0 700.4 L462.4 701.9 L462.8 703.3 L463.2 704.8 L463.7 706.2 L464.2 707.6 L464.8 709.0 L465.4 710.3 L466.2 711.6 L467.0 712.9 L467.8 714.1 L468.7 715.3 L469.7 716.4 L470.8 717.4 L472.0 718.2 L473.4 718.6 L474.8 718.4 L476.1 717.9 L477.4 717.2 L478.8 716.6 L480.1 716.2 L481.6 716.3 L482.9 716.8 L484.1 717.6 L485.2 718.6 L486.3 719.7 L487.3 720.8 L488.2 722.0 L489.1 723.2 L490.0 724.4 L490.9 725.6 L491.6 726.9 L492.2 728.3 L492.7 729.7 L493.3 731.1 L493.8 732.5 L494.3 733.9 L494.8 735.3 L495.3 736.8 L495.8 738.2 L496.4 739.5 L497.0 740.9 L497.8 742.1 L498.7 742.8 L499.6 742.6 L500.2 741.5 L500.5 740.1 L500.8 738.7 L501.1 737.2 L501.3 735.7 L501.5 734.2 L501.7 732.7 L501.8 731.2 L502.0 729.7 L502.2 728.2 L502.3 726.8 L502.5 725.3 L502.7 723.8 L502.8 722.3 L503.0 720.8 L503.1 719.3 L503.3 717.8 L503.4 716.3 L503.6 714.8 L503.7 713.3 L503.9 711.8 L504.0 710.3 L504.2 708.8 L504.3 707.4 L504.5 705.9 L504.6 704.4 L504.8 702.9 L504.9 701.4 L505.1 699.9 L505.3 698.4 L505.4 696.9 L505.6 695.4 L505.8 693.9 L505.9 692.4 L506.1 690.9 L506.2 689.5 L506.3 688.0 L506.5 686.5 L506.6 685.0 L506.8 683.5 L506.9 682.0 L507.0 680.5 L507.2 679.0 L507.3 677.5 L507.4 676.0 L507.6 674.5 L507.7 673.0 L507.9 671.5 L508.0 670.0 L508.1 668.5 L508.3 667.0 L508.4 665.6 L508.6 664.1 L508.7 662.6 L508.9 661.1 L509.0 659.6 L509.2 658.1 L509.3 656.6 L509.5 655.1 L509.7 653.6 L509.9 652.1 L510.1 650.6 L510.3 649.2 L510.5 647.7 L510.7 646.2 L510.9 644.7 L511.1 643.2 L511.4 641.7 L511.6 640.3 L511.8 638.8 L512.0 637.3 L512.2 635.8 L512.5 634.3 L512.8 632.9 L513.1 631.4 L513.4 629.9 L513.9 628.6 L514.6 627.8 L515.6 627.8 L516.6 628.6 L517.5 629.8 L518.4 630.9 L519.4 632.0 L520.6 632.9 L521.9 633.6 L523.2 634.4 L524.3 635.3 L525.3 636.4 L526.1 637.7 L526.7 639.0 L527.3 640.4 L527.8 641.8 L528.3 643.3 L528.7 644.7 L529.1 646.1 L529.5 647.6 L529.9 649.0 L530.3 650.5 L530.7 651.9 L531.1 653.4 L531.5 654.8 L531.9 656.3 L532.4 657.7 L532.8 659.1 L533.2 660.6 L533.6 662.0 L534.0 663.5 L534.3 664.9 L534.7 666.4 L535.0 667.9 L535.3 669.3 L535.6 670.8 L536.0 672.2 L536.3 673.7 L536.6 675.2 L537.0 676.6 L537.4 678.1 L537.9 679.5 L538.4 680.8 L539.1 681.8 L540.0 682.0 L540.7 681.2 L541.2 679.9 L541.5 678.4 L541.8 677.0 L542.1 675.5 L542.4 674.0 L542.6 672.5 L542.9 671.0 L543.1 669.6 L543.3 668.1 L543.6 666.6 L543.8 665.1 L544.1 663.6 L544.3 662.2 L544.6 660.7 L544.8 659.2 L545.1 657.7 L545.3 656.3 L545.5 654.8 L545.7 653.3 L545.9 651.8 L546.1 650.3 L546.3 648.8 L546.5 647.3 L546.7 645.8 L546.9 644.4 L547.1 642.9 L547.4 641.4 L547.7 639.9 L548.1 638.6 L548.7 637.7 L549.5 637.8 L550.3 638.7 L551.0 640.0 L551.5 641.4 L552.0 642.8 L552.4 644.3 L552.8 645.7 L553.1 647.2 L553.4 648.6 L553.7 650.1 L554.0 651.6 L554.2 653.1 L554.3 654.6 L554.5 656.1 L554.6 657.6 L554.7 659.1 L554.8 660.6 L555.0 662.0 L555.1 663.5 L555.2 665.0 L555.4 666.5 L555.5 668.0 L555.6 669.5 L555.8 671.0 L555.9 672.5 L556.0 674.0 L556.1 675.5 L556.2 677.0 L556.4 678.5 L556.5 680.0 L556.6 681.5 L556.7 683.0 L556.8 684.5 L556.9 686.0 L557.0 687.5 L557.1 689.0 L557.2 690.5 L557.4 692.0 L557.5 693.5 L557.6 694.9 L557.7 696.4 L557.8 697.9 L557.9 699.4 L558.0 700.9 L558.1 702.4 L558.2 703.9 L558.4 705.4 L558.5 706.9 L558.6 708.4 L558.7 709.9 L558.9 711.4 L559.0 712.9 L559.1 714.4 L559.3 715.9 L559.4 717.4 L559.6 718.9 L559.8 720.3 L560.0 721.8 L560.2 723.3 L560.4 724.8 L560.7 726.3 L561.1 727.7 L561.4 729.2 L561.7 730.7 L562.1 732.1 L562.5 733.6 L562.9 735.0 L563.3 736.5 L563.7 737.9 L564.2 739.3 L564.9 740.6 L565.7 741.8 L566.8 742.6 L568.1 742.9 L569.6 743.0 L571.1 743.0 L572.5 742.7 L573.6 742.1 L574.4 741.0 L575.0 739.6 L575.5 738.2 L575.9 736.7 L576.2 735.3 L576.6 733.8 L576.9 732.4 L577.2 730.9 L577.5 729.4 L577.8 728.0 L578.1 726.5 L578.4 725.0 L578.6 723.5 L578.9 722.1 L579.2 720.6 L579.5 719.1 L579.8 717.7 L580.1 716.2 L580.4 714.7 L580.7 713.2 L581.0 711.8 L581.2 710.3 L581.5 708.8 L581.7 707.3 L582.0 705.9 L582.2 704.4 L582.4 702.9 L582.7 701.4 L582.9 699.9 L583.1 698.4 L583.3 697.0 L583.5 695.5 L583.8 694.0 L584.0 692.5 L584.2 691.0 L584.4 689.5 L584.6 688.1 L584.9 686.6 L585.1 685.1 L585.4 683.6 L585.6 682.1 L585.9 680.7 L586.2 679.2 L586.5 677.7 L586.8 676.2 L587.1 674.8 L587.4 673.3 L587.7 671.8 L587.9 670.4 L588.2 668.9 L588.6 667.4 L588.9 666.0 L589.3 664.5 L589.8 663.2 L590.4 662.3 L591.1 662.4 L591.7 663.4 L592.1 664.8 L592.5 666.2 L592.7 667.7 L593.0 669.2 L593.2 670.7 L593.5 672.1 L593.7 673.6 L593.9 675.1 L594.2 676.6 L594.4 678.1 L594.7 679.5 L595.0 681.0 L595.2 682.5 L595.5 684.0 L595.8 685.4 L596.0 686.9 L596.2 688.4 L596.5 689.9 L596.7 691.4 L596.9 692.9 L597.1 694.3 L597.3 695.8 L597.5 697.3 L597.7 698.8 L597.9 700.3 L598.2 701.8 L598.4 703.3 L598.6 704.7 L598.8 706.2 L599.0 707.7 L599.3 709.2 L599.5 710.7 L599.8 712.1 L600.0 713.6 L600.3 715.1 L600.7 716.6 L601.1 718.0 L601.6 719.2 L602.4 719.7 L603.2 719.3 L603.8 718.1 L604.2 716.7 L604.6 715.2 L604.9 713.8 L605.2 712.3 L605.5 710.8 L605.8 709.4 L606.1 707.9 L606.4 706.4 L606.7 705.0 L607.1 703.5 L607.4 702.0 L607.8 700.6 L608.2 699.2 L608.7 697.7 L609.3 696.4 L609.9 695.0 L610.6 693.6 L611.3 692.3 L612.0 691.0 L612.8 689.8 L613.8 688.6 L614.9 687.7 L616.2 686.9 L617.5 686.3 L618.9 685.8 L620.4 685.4 L621.9 685.2 L623.3 685.2 L624.7 685.5 L626.1 686.1 L627.3 686.9 L628.5 687.9 L629.6 688.8 L630.8 689.8 L631.9 690.8 L633.0 691.8 L634.0 692.9 L635.0 694.0 L636.0 695.2 L637.1 696.2 L638.2 697.1 L639.5 697.6 L641.0 697.8 L642.4 697.5 L643.8 697.1 L645.2 696.4 L646.4 695.6 L647.4 694.6 L648.3 693.4 L649.0 692.1 L649.6 690.7 L650.2 689.3 L650.8 687.9 L651.3 686.5 L651.9 685.1 L652.4 683.7 L652.9 682.3 L653.4 680.9 L653.8 679.5 L654.1 678.0 L654.5 676.6 L654.8 675.1 L655.1 673.6 L655.5 672.2 L655.8 670.7 L656.1 669.2 L656.4 667.8 L656.7 666.3 L657.0 664.8 L657.3 663.4 L657.7 661.9 L658.0 660.4 L658.4 659.0 L658.8 657.6 L659.4 656.2 L660.0 654.9 L661.0 654.3 L662.1 654.4 L663.2 655.3 L664.1 656.4 L665.1 657.5 L666.1 658.5 L667.2 659.1 L668.3 658.8 L669.1 657.8 L669.8 656.5 L670.3 655.0 L670.7 653.6 L671.1 652.2 L671.5 650.7 L671.9 649.3 L672.2 647.8 L672.6 646.4 L673.0 644.9 L673.4 643.5 L673.8 642.0 L674.2 640.6 L674.6 639.1 L675.0 637.7 L675.4 636.2 L675.7 634.8 L676.1 633.3 L676.4 631.9 L676.7 630.4 L677.1 628.9 L677.4 627.5 L677.7 626.0 L678.1 624.5 L678.4 623.1 L678.8 621.6 L679.2 620.2 L679.6 618.7 L680.1 617.4 L680.8 616.2 L681.8 615.7 L682.7 616.2 L683.5 617.3 L684.2 618.6 L684.7 620.0 L685.1 621.4 L685.6 622.9 L686.0 624.3 L686.3 625.8 L686.7 627.2 L687.1 628.7 L687.4 630.1 L687.8 631.6 L688.1 633.0 L688.5 634.5 L688.8 636.0 L689.1 637.4 L689.4 638.9 L689.7 640.4 L689.9 641.9 L690.2 643.3 L690.4 644.8 L690.6 646.3 L690.8 647.8 L691.0 649.3 L691.2 650.8 L691.4 652.3 L691.6 653.7 L691.8 655.2 L692.0 656.7 L692.2 658.2 L692.4 659.7 L692.6 661.2 L692.8 662.7 L693.0 664.2 L693.2 665.6 L693.4 667.1 L693.6 668.6 L693.9 670.1 L694.1 671.6 L694.3 673.1 L694.6 674.5 L694.8 676.0 L695.0 677.5 L695.3 679.0 L695.5 680.5 L695.7 681.9 L695.9 683.4 L696.1 684.9 L696.3 686.4 L696.6 687.9 L696.8 689.4 L697.0 690.9 L697.2 692.3 L697.4 693.8 L697.7 695.3 L697.9 696.8 L698.2 698.3 L698.4 699.7 L698.7 701.2 L699.0 702.7 L699.4 704.1 L699.9 705.4 L700.6 706.2 L701.4 706.1 L702.0 705.1 L702.5 703.7 L702.8 702.3 L703.2 700.8 L703.4 699.3 L703.7 697.8 L704.0 696.4 L704.2 694.9 L704.5 693.4 L704.7 691.9 L704.9 690.4 L705.2 689.0 L705.4 687.5 L705.7 686.0 L705.9 684.5 L706.2 683.0 L706.4 681.6 L706.7 680.1 L707.0 678.6 L707.3 677.2 L707.7 675.7 L708.2 674.5 L708.9 673.8 L709.7 674.2 L710.2 675.3 L710.6 676.7 L710.9 678.2 L711.1 679.7 L711.4 681.2 L711.6 682.6 L711.8 684.1 L712.0 685.6 L712.2 687.1 L712.4 688.6 L712.5 690.1 L712.7 691.6 L712.9 693.1 L713.0 694.6 L713.2 696.0 L713.4 697.5 L713.5 699.0 L713.7 700.5 L713.8 702.0 L714.0 703.5 L714.1 705.0 L714.3 706.5 L714.4 708.0 L714.6 709.5 L714.7 711.0 L714.9 712.5 L715.0 714.0 L715.2 715.4 L715.3 716.9 L715.5 718.4 L715.7 719.9 L715.8 721.4 L716.0 722.9 L716.2 724.4 L716.3 725.9 L716.5 727.4 L716.7 728.9 L716.9 730.4 L717.1 731.8 L717.3 733.3 L717.5 734.8 L717.8 736.3 L718.0 737.8 L718.4 739.2 L718.8 740.6 L719.4 741.5 L720.1 741.4 L720.7 740.5 L721.2 739.1 L721.5 737.6 L721.8 736.2 L722.1 734.7 L722.3 733.2 L722.6 731.7 L722.8 730.3 L723.0 728.8 L723.2 727.3 L723.4 725.8 L723.6 724.3 L723.8 722.8 L723.9 721.3 L724.1 719.8 L724.3 718.3 L724.5 716.9 L724.6 715.4 L724.8 713.9 L725.0 712.4 L725.2 710.9 L725.3 709.4 L725.5 707.9 L725.7 706.4 L725.8 704.9 L726.0 703.4 L726.2 702.0 L726.4 700.5 L726.5 699.0 L726.7 697.5 L726.9 696.0 L727.1 694.5 L727.3 693.0 L727.5 691.5 L727.7 690.1 L727.9 688.6 L728.2 687.1 L728.4 685.6 L728.7 684.1 L729.0 682.7 L729.4 681.2 L729.9 680.0 L730.6 679.4 L731.4 679.8 L731.9 681.0 L732.3 682.4 L732.6 683.9 L732.9 685.3 L733.2 686.8 L733.4 688.3 L733.6 689.8 L733.9 691.3 L734.1 692.8 L734.3 694.2 L734.5 695.7 L734.7 697.2 L734.9 698.7 L735.1 700.2 L735.3 701.7 L735.5 703.2 L735.7 704.6 L735.9 706.1 L736.1 707.6 L736.3 709.1 L736.5 710.6 L736.7 712.1 L736.9 713.6 L737.1 715.0 L737.3 716.5 L737.6 718.0 L737.8 719.5 L738.1 721.0 L738.5 722.4 L738.9 723.8 L739.5 724.8 L740.3 725.1 L741.0 724.3 L741.5 723.0 L741.8 721.5 L742.2 720.1 L742.4 718.6 L742.7 717.1 L742.9 715.6 L743.2 714.2 L743.4 712.7 L743.6 711.2 L743.8 709.7 L744.0 708.2 L744.2 706.7 L744.4 705.2 L744.5 703.8 L744.7 702.3 L744.9 700.8 L745.1 699.3 L745.3 697.8 L745.4 696.3 L745.6 694.8 L745.8 693.3 L745.9 691.8 L746.1 690.3 L746.3 688.9 L746.4 687.4 L746.6 685.9 L746.8 684.4 L747.0 682.9 L747.1 681.4 L747.3 679.9 L747.5 678.4 L747.7 676.9 L747.8 675.4 L748.0 674.0 L748.2 672.5 L748.4 671.0 L748.6 669.5 L748.8 668.0 L749.0 666.5 L749.2 665.0 L749.4 663.6 L749.7 662.1 L749.9 660.6 L750.2 659.1 L750.5 657.7 L750.9 656.2 L751.4 654.9 L752.1 654.0 L752.9 654.0 L753.7 654.8 L754.3 656.1 L754.8 657.5 L755.3 659.0 L755.7 660.4 L756.1 661.9 L756.4 663.3 L756.8 664.8 L757.2 666.2 L757.6 667.7 L758.0 669.1 L758.5 670.5 L759.1 671.9 L759.9 672.9 L760.9 673.3 L761.9 672.8 L762.9 671.8 L763.7 670.5 L764.4 669.2 L765.2 668.0 L766.0 666.8 L767.1 666.0 L768.1 665.9 L769.1 666.7 L769.8 668.0 L770.4 669.3 L770.9 670.7 L771.3 672.2 L771.7 673.6 L772.2 675.1 L772.6 676.5 L773.0 677.9 L773.4 679.4 L773.8 680.8 L774.3 682.2 L774.8 683.7 L775.3 685.1 L775.7 686.5 L776.2 687.9 L776.6 689.4 L777.0 690.8 L777.4 692.3 L777.9 693.7 L778.5 695.0 L779.2 696.1 L780.1 696.4 L780.9 695.7 L781.5 694.5 L782.0 693.1 L782.4 691.6 L782.8 690.2 L783.2 688.7 L783.5 687.3 L783.8 685.8 L784.2 684.3 L784.5 682.9 L784.9 681.4 L785.2 680.0 L785.6 678.5 L786.0 677.1 L786.4 675.6 L786.9 674.2 L787.4 672.8 L787.9 671.4 L788.4 670.0 L788.9 668.6 L789.5 667.2 L790.0 665.7 L790.5 664.4 L791.1 663.0 L791.7 661.6 L792.4 660.3 L793.2 659.0 L794.1 657.9 L795.2 656.8 L796.4 655.9 L797.6 655.1 L799.0 654.5 L800.4 654.1 L801.7 654.1 L803.0 654.7 L804.0 655.7 L804.9 656.9 L805.7 658.1 L806.6 659.4 L807.5 660.5 L808.5 661.6 L809.7 662.5 L811.0 663.2 L812.3 663.9 L813.7 664.5 L815.1 665.1 L816.5 665.6 L817.9 666.1 L819.3 666.5 L820.8 667.0 L822.2 667.4 L823.7 667.7 L825.1 667.9 L826.6 667.8 L828.0 667.4 L829.2 666.6 L830.3 665.6 L831.4 664.6 L832.3 663.4 L833.2 662.2 L834.0 660.9 L834.7 659.6 L835.3 658.3 L836.1 657.0 L836.9 655.7 L837.8 654.7 L839.0 654.2 L840.2 654.5 L841.2 655.4 L842.1 656.6 L842.9 657.9 L843.6 659.2 L844.3 660.5 L845.0 661.9 L845.7 663.2 L846.4 664.5 L847.0 665.9 L847.6 667.3 L848.2 668.6 L848.7 670.0 L849.3 671.5 L849.8 672.9 L850.3 674.3 L850.9 675.6 L851.5 677.0 L852.2 678.3 L853.0 679.6 L853.8 680.9 L854.7 682.1 L855.7 683.2 L856.6 684.3 L857.8 685.3 L859.0 686.0 L860.3 686.1 L861.5 685.6 L862.6 684.7 L863.5 683.5 L864.3 682.2 L865.1 681.0 L866.0 679.8 L867.1 678.8 L868.2 677.8 L869.5 677.0 L870.7 676.2 L872.1 675.5 L873.5 675.1 L874.8 675.1 L876.1 675.6 L877.0 676.6 L877.8 677.9 L878.5 679.2 L879.1 680.6 L879.7 681.9 L880.3 683.3 L880.9 684.7 L881.5 686.1 L882.1 687.4 L882.7 688.8 L883.2 690.2 L883.7 691.7 L884.2 693.1 L884.7 694.5 L885.3 695.9 L885.8 697.3 L886.3 698.7 L886.9 700.1 L887.4 701.5 L887.9 702.9 L888.5 704.3 L889.0 705.7 L889.6 707.1 L890.2 708.4 L890.8 709.8 L891.5 711.1 L892.3 712.4 L893.2 713.6 L894.2 714.7 L895.3 715.7 L896.5 716.6 L897.7 717.6 L898.8 718.6 L899.9 719.6 L900.9 720.7 L901.8 721.9 L902.6 723.2 L903.3 724.5 L904.1 725.8 L904.9 727.0 L905.7 728.3 L906.5 729.5 L907.5 730.6 L908.7 731.3 L910.1 731.4 L911.4 731.0 L912.7 730.3 L913.8 729.3 L915.0 728.4 L916.1 727.4 L917.4 726.6 L918.7 726.0 L920.1 725.8 L921.5 726.0 L922.9 726.6 L924.2 727.3 L925.5 728.0 L926.8 728.5 L928.2 728.7 L929.5 728.3 L930.7 727.4 L931.6 726.3 L932.5 725.1 L933.3 723.8 L934.1 722.5 L934.8 721.2 L935.6 719.9 L936.4 718.7 L937.3 717.4 L938.3 716.3 L939.3 715.3 L940.5 714.3 L941.7 713.4 L943.0 712.7 L944.3 712.3 L945.7 712.4 L946.9 713.0 L948.0 714.0 L949.0 715.1 L949.9 716.3 L950.7 717.5 L951.5 718.8 L952.2 720.1 L952.9 721.5 L953.4 722.9 L953.9 724.3 L954.4 725.7 L954.9 727.1 L955.4 728.5 L955.9 729.9 L956.4 731.3 L957.0 732.7 L957.6 734.1 L958.4 735.3 L959.4 736.0 L960.5 735.8 L961.4 734.9 L962.1 733.7 L962.7 732.3 L963.2 730.9 L963.8 729.5 L964.3 728.1 L964.8 726.7 L965.3 725.3 L965.9 723.9 L966.5 722.6 L967.3 721.3 L968.0 720.0 L968.8 718.7 L969.6 717.4 L970.4 716.1 L971.3 714.9 L972.3 713.8 L973.4 712.9 L974.7 712.2 L976.1 711.6 L977.5 711.1 L978.9 710.8 L980.4 710.6 L981.9 710.7 L983.4 710.9 L984.9 711.2 L986.3 711.5 L987.8 711.7 L989.3 711.7 L990.7 711.4 L992.1 710.9 L993.3 710.1 L994.5 709.2 L995.7 708.3 L996.9 707.4 L998.1 706.5 L999.4 705.7 L1000.6 704.8 L1001.8 704.0 L1003.1 703.2 L1004.4 702.4 L1005.7 701.7 L1007.1 701.3 L1008.5 701.3 L1009.9 701.7 L1011.2 702.4 L1012.3 703.3 L1013.4 704.4 L1014.5 705.4 L1015.5 706.5 L1016.6 707.6 L1017.7 708.6 L1018.8 709.5 L1020.1 710.4 L1021.3 711.2 L1022.6 712.0 L1023.8 712.8 L1025.1 713.6 L1026.4 714.4 L1027.6 715.1 L1028.4 715.7" fill="none" stroke="#ffbf47" stroke-width="2.7" stroke-linejoin="round" stroke-linecap="round"/></svg><!--/CHARTSVG-->

</body></html>
